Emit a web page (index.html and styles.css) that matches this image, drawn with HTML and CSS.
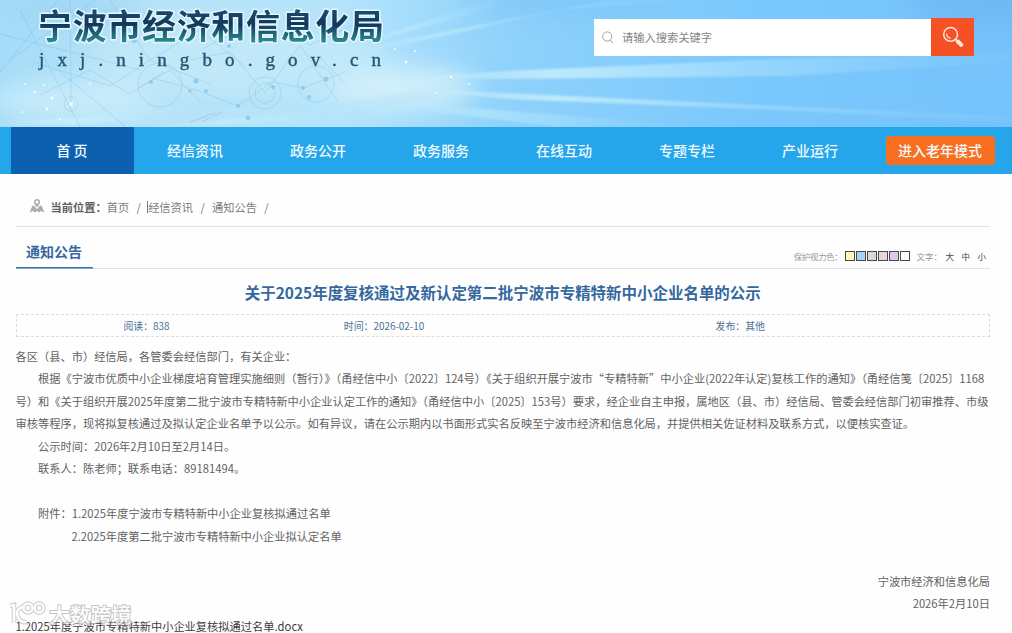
FILE: index.html
```html
<!DOCTYPE html>
<html lang="zh-CN">
<head>
  <meta charset="UTF-8" />
  <meta name="viewport" content="width=device-width, initial-scale=1" />
  <title>宁波市经济和信息化局</title>
  <link rel="stylesheet" href="styles.css">
</head>
<body>

  <header class="banner">
    <svg class="banner-bg" viewBox="0 0 1012 127" preserveAspectRatio="none" aria-hidden="true">
      <defs>
        <linearGradient id="sky" x1="0" y1="0" x2="1" y2="0">
          <stop offset="0" stop-color="#a5dcf8" />
          <stop offset=".14" stop-color="#b9e4f8" />
          <stop offset=".34" stop-color="#b4e4fb" />
          <stop offset=".5" stop-color="#8fd2fb" />
          <stop offset=".75" stop-color="#7ac8fd" />
          <stop offset="1" stop-color="#76c2fb" />
        </linearGradient>
        <linearGradient id="ray" x1="0" y1="0" x2="1" y2="0">
          <stop offset="0" stop-color="#d8f4fc" stop-opacity=".1" />
          <stop offset=".25" stop-color="#c9f0fc" stop-opacity=".8" />
          <stop offset="1" stop-color="#9bd8fc" stop-opacity=".1" />
        </linearGradient>
        <filter id="soft" x="-30%" y="-100%" width="160%" height="300%"><feGaussianBlur stdDeviation="12" /></filter>
        <filter id="edge"><feGaussianBlur stdDeviation="1" /></filter>
      </defs>
      <rect width="1012" height="127" fill="url(#sky)" />
      <g filter="url(#soft)">
        <ellipse cx="400" cy="88" rx="75" ry="20" fill="#d8f2fb" opacity=".9" />
        <ellipse cx="70" cy="100" rx="80" ry="20" fill="#cdedfb" opacity=".8" />
        <ellipse cx="240" cy="60" rx="150" ry="35" fill="#c6eaf8" opacity=".7" />
        <ellipse cx="80" cy="10" rx="70" ry="14" fill="#8fcdf4" opacity=".5" />
        <ellipse cx="1000" cy="0" rx="90" ry="24" fill="#6cb2f0" opacity=".6" />
        <ellipse cx="560" cy="0" rx="100" ry="12" fill="#72bdf5" opacity=".5" />
      </g>
      <g fill="url(#ray)" filter="url(#edge)">
        <path d="M370 52 L560 10 L700 0 L610 0 L380 44z" opacity=".7" />
        <path d="M370 42 L500 6 L520 0 L490 0 L380 36z" opacity=".6" />
        <path d="M400 78 L506 71 L800 58 L1012 54 L1012 62 L790 76 L506 79z" />
        <path d="M400 88 L506 93 L800 107 L1012 116 L1012 122 L780 110 L506 99z" />
        <path d="M420 104 L600 118 L700 127 L560 127 L420 110z" opacity=".6" />
        <path d="M0 121 L90 117 L190 98 L300 100 L180 114 L90 124 L0 125z" opacity=".9" />
        <path d="M150 127 L300 112 L440 84 L470 90 L330 120z" opacity=".7" />
      </g>
      <g class="mesh">
        <path d="M0 72 L58 0 M20 10 L80 127 M12 58 L95 0 M0 34 L140 70 M70 0 L71 104 M58 70 L126 127 M33 62 L110 86 L150 60 L210 84 M40 95 L90 70 L130 94 L164 72 M110 0 L150 60 L200 30 L245 66" />
        <path d="M152 78 L196 90 L238 106 L272 82 L303 88 L345 72 M200 50 L260 20 L310 45 L360 22 M190 60 L230 52 L265 93 L300 45 L338 102 M255 40 L278 20 M318 55 L345 84 M138 88 L170 70 L200 102" />
        <circle cx="265" cy="93" r="16" /><circle cx="265" cy="93" r="10" />
        <circle cx="160" cy="85" r="22" /><circle cx="316" cy="84" r="18" /><circle cx="71" cy="104" r="7" />
      </g>
      <g class="nodes">
        <circle cx="196" cy="81" r="2.5" /><circle cx="206" cy="91" r="2" /><circle cx="238" cy="106" r="2" />
        <circle cx="248" cy="118" r="2.5" /><circle cx="303" cy="88" r="2" /><circle cx="326" cy="79" r="2.5" />
        <circle cx="273" cy="87" r="2" /><circle cx="309" cy="97" r="2" /><circle cx="151" cy="82" r="2" />
        <circle cx="134" cy="40" r="3" /><circle cx="229" cy="46" r="2" /><circle cx="190" cy="91" r="1.5" />
      </g>
      <g class="sparks">
        <circle cx="52" cy="98" r="1.5" /><circle cx="44" cy="85" r="1" /><circle cx="47" cy="109" r="1.4" />
        <circle cx="71" cy="104" r="2" /><circle cx="90" cy="84" r="1" /><circle cx="22" cy="112" r="1" />
        <circle cx="35" cy="92" r="1.2" /><circle cx="406" cy="62" r="1.4" /><circle cx="415" cy="51" r="1" />
        <circle cx="395" cy="49" r="1" /><circle cx="451" cy="77" r="1.3" /><circle cx="469" cy="84" r="1" />
        <circle cx="436" cy="93" r="1" /><circle cx="25" cy="84" r="1" /><circle cx="60" cy="119" r="1" />
      </g>
      <path d="M190 122 L215 113 M202 122 L222 112" stroke="#b58bb8" stroke-width=".7" opacity=".5" />
    </svg>

    <svg class="site-name" width="370" height="80" viewBox="0 0 370 80">
      <defs>
        <linearGradient id="ink" x1="0" y1="0" x2="0" y2="1">
          <stop offset=".2" stop-color="#1c4b70" />
          <stop offset=".5" stop-color="#12375c" />
          <stop offset=".85" stop-color="#2c8a94" />
        </linearGradient>
      </defs>
      <text class="name-cn" x="11" y="39" textLength="346">宁波市经济和信息化局</text>
      <text class="name-en" x="12" y="66" textLength="342">jxj.ningbo.gov.cn</text>
    </svg>

    <form class="search">
      <label class="search-field">
        <svg width="12" height="13" viewBox="0 0 12 13" fill="none" stroke="#a3a3a3" stroke-width="1">
          <circle cx="5.2" cy="5.5" r="4.6" />
          <path d="M8.3 9l2.6 3" />
        </svg>
        <input type="text" placeholder="请输入搜索关键字">
      </label>
      <button type="button" class="search-btn" aria-label="搜索">
        <svg width="22" height="22" viewBox="0 0 22 22" fill="none" stroke="#ffe9dc" stroke-linecap="round">
          <circle cx="8.6" cy="8.4" r="6.9" stroke-width="1.5" />
          <path d="M4.7 8.2c.2 2 1.5 3.5 3.5 3.9" stroke-width="1.2" />
          <path d="M13.7 13.5l1.3 1.3" stroke-width="1.5" />
          <path d="M15.8 15.5l3.4 3.3" stroke-width="4" />
        </svg>
      </button>
    </form>
  </header>

  <nav class="nav">
    <a class="active">首 页</a>
    <a>经信资讯</a>
    <a>政务公开</a>
    <a>政务服务</a>
    <a>在线互动</a>
    <a>专题专栏</a>
    <a>产业运行</a>
    <span class="elder">进入老年模式</span>
  </nav>

  <main class="content">
    <div class="crumbs">
      <svg width="16" height="15" viewBox="0 0 16 15" fill="#acacac">
        <path d="M8 0a3 3 0 0 1 3 3c0 2-1.5 3.4-3 5.5C6.5 6.4 5 5 5 3a3 3 0 0 1 3-3zm0 1.600a1.500 1.500 0 1 0 0 3 1.500 1.500 0 0 0 0-3z" fill-rule="evenodd" />
        <path d="M3.5 6.500l2 .5L8 10.300 10.500 7l2-.5L15.500 13.500l-3.500-1.500-2 1.500L8 11.800l-2 1.700L4 12 .5 13.500z" />
      </svg>
      <b>当前位置：</b>
      <a>首页</a><i>/</i><a class="caret">经信资讯</a><i>/</i><a>通知公告</a><i>/</i>
    </div>

    <div class="section-head">
      <h2>通知公告</h2>
      <div class="tools">
        <span class="eye-label">保护视力色：</span>
        <div class="swatches">
          <i class="yellow"></i><i class="blue"></i><i class="gray"></i><i class="pink"></i><i class="purple"></i><i class="white"></i>
        </div>
        <span class="size-label">文字：</span>
        <a>大</a><a>中</a><a>小</a>
      </div>
    </div>

    <h1>关于2025年度复核通过及新认定第二批宁波市专精特新中小企业名单的公示</h1>

    <div class="meta">
      <span>阅读：838</span>
      <span>时间：2026-02-10</span>
      <span>发布：其他</span>
    </div>

    <article class="article">
      <p>各区（县、市）经信局，各管委会经信部门，有关企业：</p>
      <p class="indent">根据《宁波市优质中小企业梯度培育管理实施细则（暂行）》（甬经信中小〔2022〕124号）《关于组织开展宁波市“专精特新”中小企业(2022年认定)复核工作的通知》（甬经信笺〔2025〕1168<br>号）和《关于组织开展2025年度第二批宁波市专精特新中小企业认定工作的通知》（甬经信中小〔2025〕153号）要求，经企业自主申报，属地区（县、市）经信局、管委会经信部门初审推荐、市级<br>审核等程序，现将拟复核通过及拟认定企业名单予以公示。如有异议，请在公示期内以书面形式实名反映至宁波市经济和信息化局，并提供相关佐证材料及联系方式，以便核实查证。</p>
      <p class="indent">公示时间：2026年2月10日至2月14日。</p>
      <p class="indent">联系人：陈老师；联系电话：89181494。</p>
      <p class="indent gap">附件：1.2025年度宁波市专精特新中小企业复核拟通过名单</p>
      <p class="indent-more">2.2025年度第二批宁波市专精特新中小企业拟认定名单</p>
      <p class="sign gap">宁波市经济和信息化局</p>
      <p class="sign">2026年2月10日</p>
    </article>
    <a class="file">1.2025年度宁波市专精特新中小企业复核拟通过名单.docx</a>
  </main>

  <div class="watermark">
    <svg width="38" height="26" viewBox="0 0 38 26" fill="none">
      <g class="mark-edge">
        <path d="M2 5l4-1v18" /><path d="M17 5c-7 2-10 6-7 11 2 4 5 6 9 5" />
        <circle cx="20" cy="7" r="4.5" /><circle cx="31" cy="7" r="4.5" />
      </g>
      <g class="mark-fill">
        <path d="M2 5l4-1v18" /><path d="M17 5c-7 2-10 6-7 11 2 4 5 6 9 5" />
        <circle cx="20" cy="7" r="4.5" /><circle cx="31" cy="7" r="4.5" />
      </g>
    </svg>
    <span>大数跨境</span>
  </div>

</body>
</html>
```

FILE: styles.css
```css
:root {
  --blue: #25a5ea;
  --blue-dark: #0d5fb0;
  --ink-blue: #34689f;
  --text: #626262;
  --line: #dfe2e4;
}

* {
  box-sizing: border-box;
}

body {
  margin: 0;
  height: 633px;
  overflow: hidden;
  position: relative;
  background: #fefefe;
  color: var(--text);
  font-family: "Noto Sans CJK SC", sans-serif;
  font-size: 11.24px;
}

i {
  font-style: normal;
}

.banner {
  position: relative;
  height: 127px;
  display: flex;
  justify-content: space-between;
  padding: 0 38px 0 27px;
  overflow: hidden;
}

.banner-bg {
  position: absolute;
  inset: 0;
  width: 100%;
  height: 100%;
}

.mesh {
  fill: none;
  stroke: #5fa9d2;
  stroke-width: .6;
  opacity: .4;
}

.nodes {
  fill: #6cc0e6;
  opacity: .6;
}

.sparks {
  fill: #f2fcff;
}

.site-name {
  position: relative;
}

.name-cn {
  font-size: 34px;
  font-weight: 700;
  fill: url(#ink);
  stroke: #e3f7fb;
  stroke-width: 3px;
  stroke-linejoin: round;
  paint-order: stroke;
}

.name-en {
  font-family: "Liberation Serif", serif;
  font-size: 19px;
  fill: #255675;
  stroke: #255675;
  stroke-width: .4px;
}

.search {
  position: relative;
  display: flex;
  align-items: flex-end;
  width: 380px;
  height: 38px;
  margin-top: 18px;
}

.search-field {
  flex: 1;
  height: 37px;
  display: flex;
  align-items: center;
  gap: 8px;
  padding: 0 0 1px 8px;
  background: #fff;
}

.search-field input {
  flex: 1;
  min-width: 0;
  padding: 0;
  border: 0;
  outline: 0;
  font: inherit;
}

.search-field input::placeholder {
  color: #858585;
}

.search-btn {
  width: 43px;
  height: 38px;
  display: flex;
  align-items: center;
  justify-content: center;
  padding: 0;
  border: 0;
  background: #f65124;
}

.nav {
  display: flex;
  height: 47px;
  padding-left: 11px;
  background: var(--blue);
  color: #f1fbff;
  font-size: 14px;
  font-weight: 500;
  line-height: 47px;
  text-align: center;
}

.nav a {
  width: 123px;
  padding-right: 1px;
}

.nav .active {
  background: var(--blue-dark);
}

.elder {
  width: 109px;
  height: 29px;
  margin: 9px 0 0 14px;
  padding-right: 1px;
  border-radius: 4px;
  background: #f8701f;
  line-height: 29px;
}

.content {
  padding: 0 22px 0 15.5px;
}

.crumbs {
  display: flex;
  align-items: center;
  height: 53px;
  padding: 13px 0 0 13px;
  border-bottom: 1px solid var(--line);
  color: #7c7c7c;
}

.crumbs b {
  margin-left: 6px;
  color: #5e5e5e;
}

.crumbs i {
  width: 19px;
  text-align: center;
}

.caret {
  height: 12px;
  line-height: 12px;
  border-left: 1px solid #777;
  margin-left: -1px;
}

.section-head {
  display: flex;
  justify-content: space-between;
  height: 42px;
  border-bottom: 1px solid var(--line);
}

.section-head h2 {
  width: 77px;
  height: 41px;
  margin: 0;
  padding-top: 4px;
  border-bottom: 1px solid #3b74ac;
  box-shadow: 0 1px #7fa6cb;
  color: var(--ink-blue);
  font-size: 14px;
  font-weight: 700;
  line-height: 40px;
  text-align: center;
}

.tools {
  display: flex;
  align-items: center;
  padding: 16px 4px 0 0;
  color: #999;
  font-size: 8.5px;
}

.tools a {
  margin-left: 7.5px;
  color: #444;
}

.eye-label {
  letter-spacing: -.4px;
  margin-right: 3px;
}

.swatches {
  display: flex;
  gap: 1px;
}

.swatches i {
  width: 10px;
  height: 10px;
  border: 1px solid #4a4a4a;
}

.yellow { background: #faf9b4; }
.blue { background: #a4d5f5; }
.gray { background: #d8d8d8; }
.pink { background: #ecd5d8; }
.purple { background: #dcc8e8; }
.white { background: #fff; }

.size-label {
  margin: 0 -4px 0 6px;
}

h1 {
  margin: 12px 0 10px;
  color: var(--ink-blue);
  font-size: 15.48px;
  font-weight: 700;
  line-height: 23px;
  text-align: center;
}

.meta {
  display: grid;
  grid-template-columns: 260px 215px 1fr;
  height: 23px;
  border: 1px dashed #d8dde0;
  color: #4a7195;
  font-size: 9.9px;
  line-height: 22px;
  text-align: center;
}

.article {
  padding-top: 7.5px;
  line-height: 22.5px;
  white-space: nowrap;
}

.article p {
  margin: 0;
}

.article .indent {
  text-indent: 22.5px;
}

.article .indent-more {
  text-indent: 56px;
}

.article .gap {
  margin-top: 22.5px;
}

.article .sign {
  text-align: right;
}

.file {
  display: block;
  color: #3c3c3c;
  line-height: 22.5px;
}

/* bottom left stamp over the page */
.watermark {
  position: absolute;
  left: 8px;
  bottom: 6px;
  display: flex;
  gap: 3px;
  align-items: center;
  opacity: .75;
}

.watermark span {
  color: #fff;
  font-size: 20.7px;
  font-weight: 500;
  line-height: 26px;
  -webkit-text-stroke: 2px #b5b5b5;
  paint-order: stroke;
}

.mark-edge {
  stroke: #bbb;
  stroke-width: 4.5;
}

.mark-fill {
  stroke: #fff;
  stroke-width: 2.5;
}
```
